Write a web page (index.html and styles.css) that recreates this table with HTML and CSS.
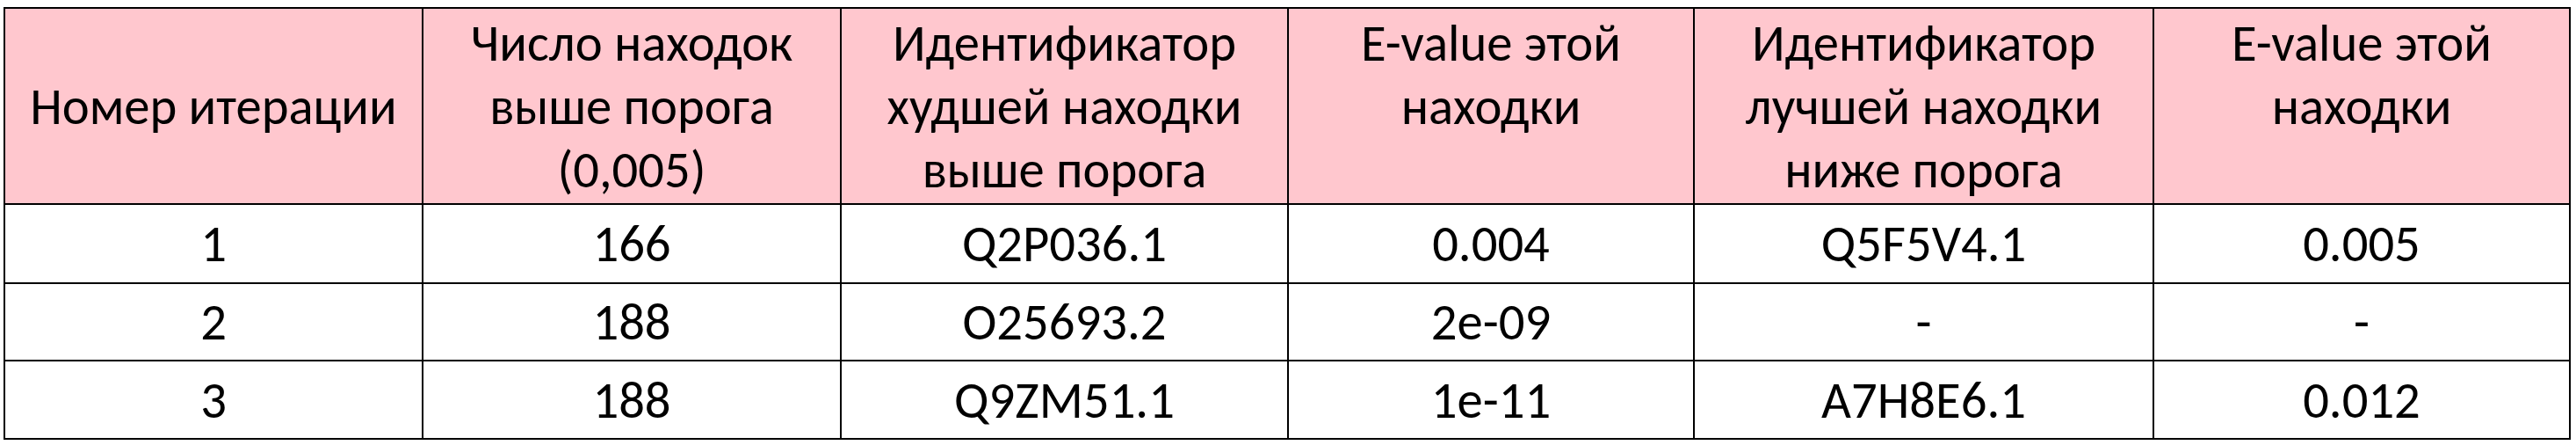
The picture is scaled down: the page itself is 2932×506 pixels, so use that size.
FILE: index.html
```html
<!DOCTYPE html>
<html lang="ru">
<head>
<meta charset="utf-8">
<title>Итерации</title>
<link rel="stylesheet" href="styles.css">
</head>
<body>
<table class="grid">
  <colgroup>
    <col class="c1"><col class="c2"><col class="c3"><col class="c4"><col class="c5"><col class="c6">
  </colgroup>
  <thead>
    <tr class="head">
      <th class="mid">Номер итерации</th>
      <th>Число находок выше порога (0,005)</th>
      <th>Идентификатор худшей находки выше порога</th>
      <th>E-value этой находки</th>
      <th>Идентификатор лучшей находки ниже порога</th>
      <th>E-value этой находки</th>
    </tr>
  </thead>
  <tbody>
    <tr class="r1"><td>1</td><td>166</td><td>Q2P036.1</td><td>0.004</td><td>Q5F5V4.1</td><td>0.005</td></tr>
    <tr class="r2"><td>2</td><td>188</td><td>O25693.2</td><td>2e-09</td><td>-</td><td>-</td></tr>
    <tr class="r3"><td>3</td><td>188</td><td>Q9ZM51.1</td><td>1e-11</td><td>A7H8E6.1</td><td>0.012</td></tr>
  </tbody>
</table>
</body>
</html>
```
FILE: styles.css
```css
html, body {
  margin: 0;
  padding: 0;
  background: #ffffff;
}
body {
  padding: 8px 0 0 4px;
  font-family: "Carlito", "Lato", "Open Sans", "Liberation Sans", sans-serif;
  color: #000;
}
.grid {
  border-collapse: collapse;
  table-layout: fixed;
  width: 2920px;
  font-size: 58.67px;
  line-height: 72px;
}
.c1 { width: 476px; }
.c2 { width: 476px; }
.c3 { width: 509px; }
.c4 { width: 462px; }
.c5 { width: 523px; }
.c6 { width: 474px; }
.grid th, .grid td {
  border: 2px solid #000;
  text-align: center;
  padding: 0 6px;
  font-weight: normal;
  overflow: hidden;
}
.grid th {
  background: #ffc7ce;
  vertical-align: top;
  padding-top: 3px;
}
.grid th.mid {
  vertical-align: middle;
  padding-top: 0;
}
.head { height: 223px; }
.r1 { height: 90px; }
.r2 { height: 88px; }
.r3 { height: 89px; }
.grid td {
  vertical-align: middle;
}
```
